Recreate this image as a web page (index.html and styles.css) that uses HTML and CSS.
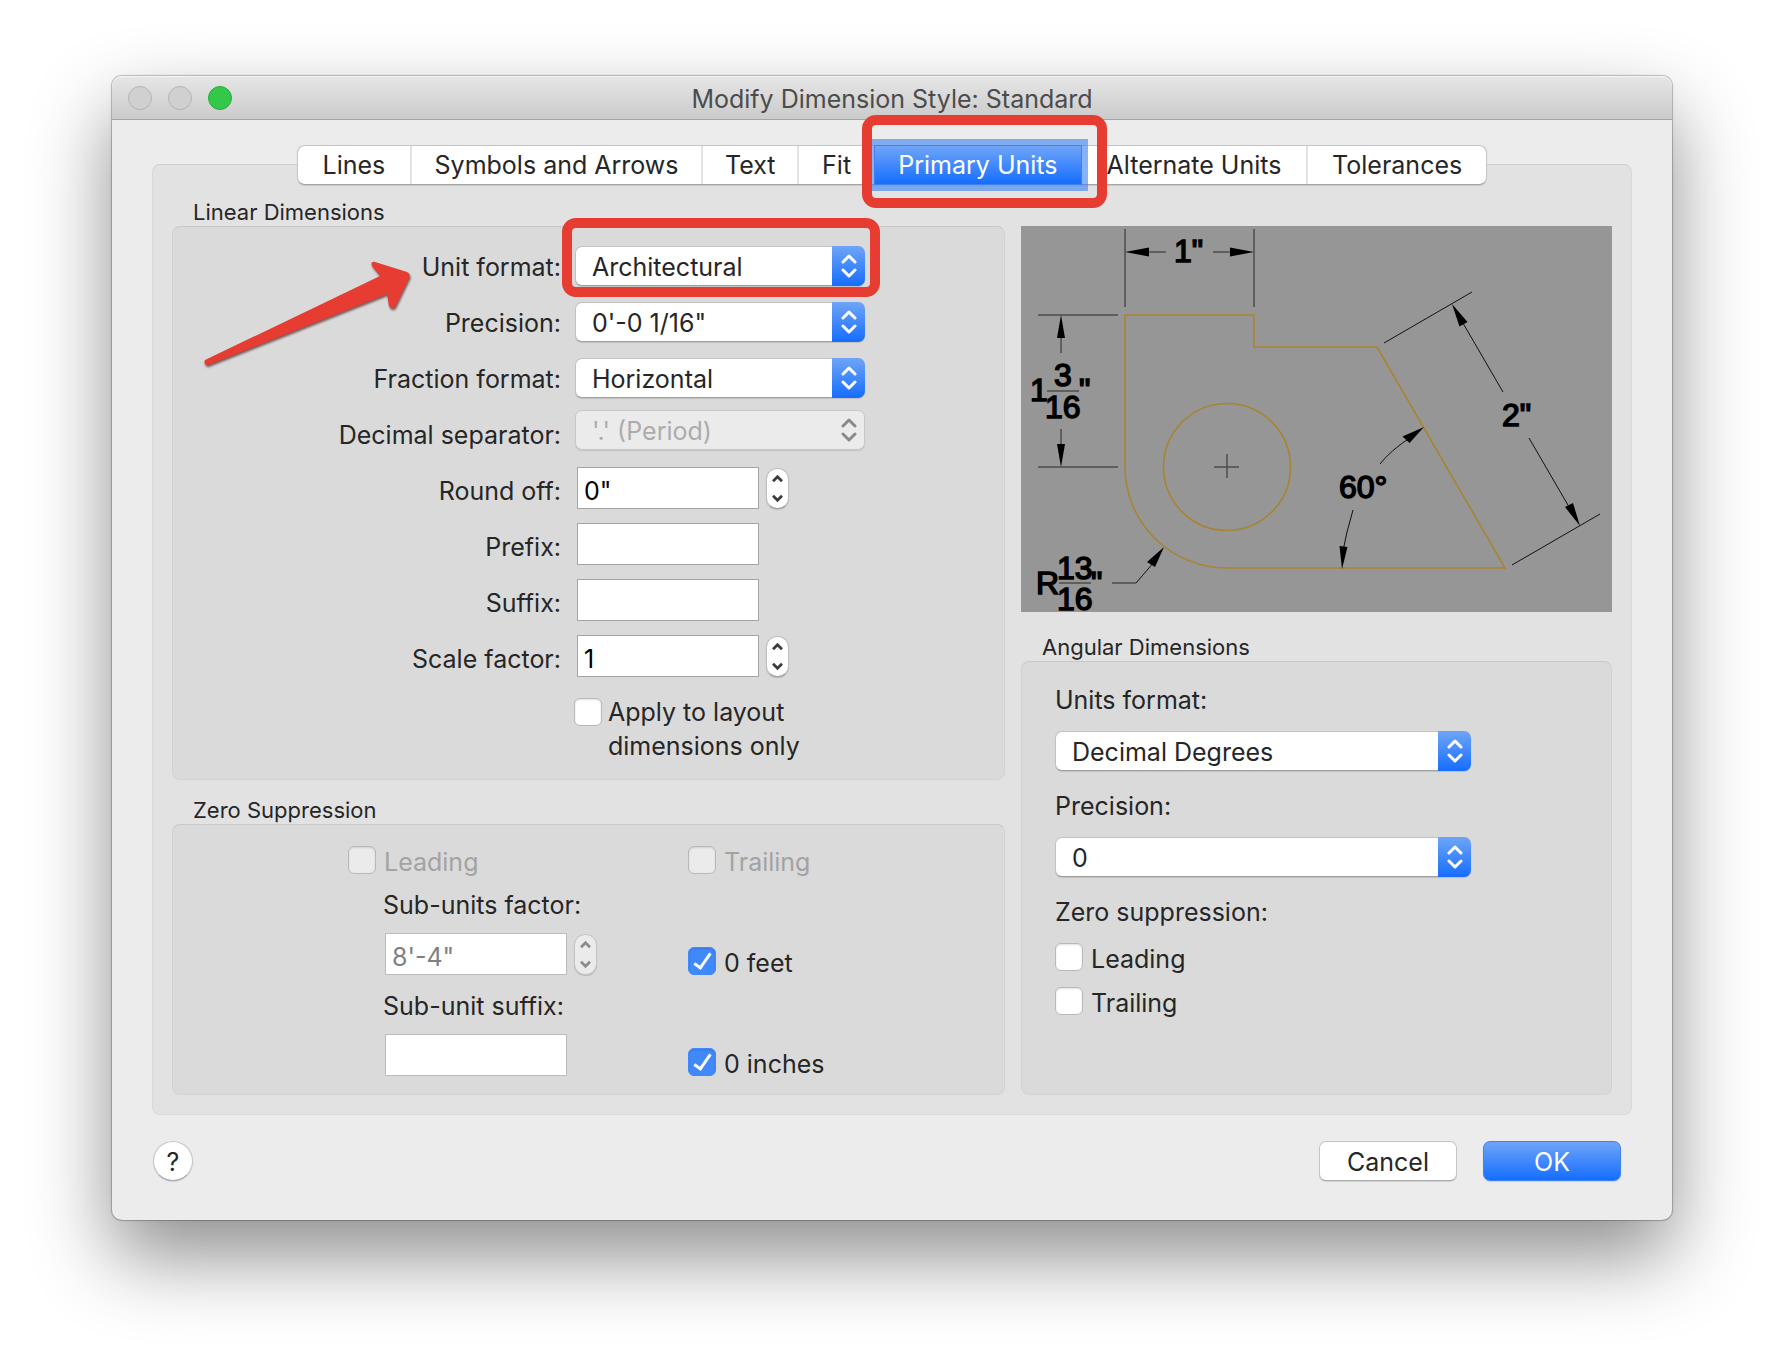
FILE: index.html
```html
<!DOCTYPE html>
<html lang="en">
<head>
  <meta charset="UTF-8" />
  <title>Modify Dimension Style: Standard</title>
  <meta name="viewport" content="width=device-width, initial-scale=1" />
  <link rel="stylesheet" href="styles.css">
</head>
<body>
  <svg class="sprite" aria-hidden="true">
    <symbol id="updown" viewBox="0 0 16 28">
      <path d="M2 10 L8 4 L14 10 M2 18 L8 24 L14 18" />
    </symbol>
    <symbol id="up" viewBox="0 0 14 10">
      <path d="M2 8 L7 3 L12 8" />
    </symbol>
    <symbol id="down" viewBox="0 0 14 10">
      <path d="M2 2 L7 7 L12 2" />
    </symbol>
  </svg>

  <main class="window">
    <header class="titlebar">
      <div class="lights">
        <button type="button" class="light" aria-label="Close" disabled></button>
        <button type="button" class="light" aria-label="Minimize" disabled></button>
        <button type="button" class="light zoom" aria-label="Zoom"></button>
      </div>
      <h1>Modify Dimension Style: Standard</h1>
    </header>

    <form class="content">
      <div class="tabs" role="tablist">
        <button type="button" role="tab">Lines</button>
        <button type="button" role="tab">Symbols and Arrows</button>
        <button type="button" role="tab">Text</button>
        <button type="button" role="tab">Fit</button>
        <button type="button" role="tab" class="active" aria-selected="true">Primary Units<span class="mark mark-tab"></span></button>
        <button type="button" role="tab">Alternate Units</button>
        <button type="button" role="tab">Tolerances</button>
      </div>

      <div class="panel">
        <div class="column">
          <section>
            <h2>Linear Dimensions</h2>
            <div class="group linear">
              <svg class="arrow" viewBox="0 0 216 114" aria-hidden="true">
                <path d="M4 100 L179 16 L171 6 Q169 1 174 2 L206 12 Q210 14 208 18 L194 47 Q190 50 188 46 L186 34 L7 105 Q2 105 4 100 Z" />
              </svg>
              <div class="row">
                <label for="unit-format">Unit format:</label>
                <div class="select">
                  <select id="unit-format"><option>Architectural</option></select>
                  <span class="cap"><svg><use href="#updown" /></svg></span>
                  <span class="mark mark-select"></span>
                </div>
              </div>
              <div class="row">
                <label for="precision">Precision:</label>
                <div class="select">
                  <select id="precision"><option>0'-0 1/16"</option></select>
                  <span class="cap"><svg><use href="#updown" /></svg></span>
                </div>
              </div>
              <div class="row">
                <label for="fraction">Fraction format:</label>
                <div class="select">
                  <select id="fraction"><option>Horizontal</option></select>
                  <span class="cap"><svg><use href="#updown" /></svg></span>
                </div>
              </div>
              <div class="row row-disabled">
                <label for="separator">Decimal separator:</label>
                <div class="select">
                  <select id="separator" disabled><option>'.' (Period)</option></select>
                  <span class="cap"><svg><use href="#updown" /></svg></span>
                </div>
              </div>
              <div class="row">
                <label for="round">Round off:</label>
                <div class="field">
                  <input type="text" id="round" value='0"' />
                  <span class="stepper">
                    <button type="button" aria-label="Increase"><svg><use href="#up" /></svg></button>
                    <button type="button" aria-label="Decrease"><svg><use href="#down" /></svg></button>
                  </span>
                </div>
              </div>
              <div class="row">
                <label for="prefix">Prefix:</label>
                <div class="field"><input type="text" id="prefix" /></div>
              </div>
              <div class="row">
                <label for="suffix">Suffix:</label>
                <div class="field"><input type="text" id="suffix" /></div>
              </div>
              <div class="row">
                <label for="scale">Scale factor:</label>
                <div class="field">
                  <input type="text" id="scale" value="1" />
                  <span class="stepper">
                    <button type="button" aria-label="Increase"><svg><use href="#up" /></svg></button>
                    <button type="button" aria-label="Decrease"><svg><use href="#down" /></svg></button>
                  </span>
                </div>
              </div>
              <label class="check layout-only">
                <input type="checkbox" />
                <span>Apply to layout<br>dimensions only</span>
              </label>
            </div>
          </section>

          <section>
            <h2>Zero Suppression</h2>
            <div class="group zero">
              <label class="check off"><input type="checkbox" disabled /><span>Leading</span></label>
              <label class="check off"><input type="checkbox" disabled /><span>Trailing</span></label>
              <div class="sub">
                <label for="sub-factor">Sub-units factor:</label>
                <div class="field">
                  <input type="text" id="sub-factor" value="8'-4&quot;" disabled />
                  <span class="stepper off">
                    <button type="button" aria-label="Increase" disabled><svg><use href="#up" /></svg></button>
                    <button type="button" aria-label="Decrease" disabled><svg><use href="#down" /></svg></button>
                  </span>
                </div>
              </div>
              <label class="check low"><input type="checkbox" checked /><span>0 feet</span></label>
              <div class="sub">
                <label for="sub-suffix">Sub-unit suffix:</label>
                <div class="field"><input type="text" id="sub-suffix" disabled /></div>
              </div>
              <label class="check low"><input type="checkbox" checked /><span>0 inches</span></label>
            </div>
          </section>
        </div>

        <div class="column side">
          <svg class="preview" viewBox="-1 0 591 386" role="img" aria-label="Dimension preview">
            <!-- part outline -->
            <g class="part">
              <path d="M103 241 V89 H232 V121 H355 L483 342 H205 A102 101 0 0 1 103 241 Z" />
              <circle cx="205" cy="241" r="63.5" />
            </g>
            <!-- extension and dimension lines -->
            <g class="soft">
              <path d="M103 3 V81 M232 3 V81 M120 26 H144 M191 26 H215" />
              <path d="M16 89 H96 M16 241 H96 M39 105 V127 M39 203 V225" />
              <path d="M192 241 H217 M205 228 V252 M25 165 H57 M37 357 H69 M90 357 H114" />
            </g>
            <g class="hard">
              <path d="M362 117 L450 66 M490 339 L578 288 M438 92 L481 166 M507 212 L550 286" />
              <path d="M114 357 L133 335 M389 211 Q368 225 358 238 M331 284 L325 306 L321 325" />
            </g>
            <g class="heads">
              <path d="M103 26 L127 21.500 V30.500 Z M232 26 L208 21.500 V30.500 Z" />
              <path d="M39 89 L35 112 H43 Z M39 241 L35 218 H43 Z" />
              <path d="M430 78 L437.500 100.500 L445.500 96 Z M558 300 L543 281 L551 277 Z" />
              <path d="M402 201 L380.500 210.500 L387.500 217 Z M320 343 L317.500 320 L325.500 321 Z M142 321 L125 336 L133 341 Z" />
            </g>
            <g class="dims">
              <text x="152" y="36">1"</text>
              <text x="8" y="175">1</text>
              <text x="32" y="160">3</text>
              <text x="23" y="192">16</text>
              <text x="57" y="175">"</text>
              <text x="480" y="200">2"</text>
              <text x="317" y="272">60°</text>
              <text x="14" y="368">R</text>
              <text x="35" y="353">13</text>
              <text x="35" y="384">16</text>
              <text x="69" y="368">"</text>
            </g>
          </svg>

          <section class="fill">
            <h2>Angular Dimensions</h2>
            <div class="group angular">
              <label for="angle-format">Units format:</label>
              <div class="select">
                <select id="angle-format"><option>Decimal Degrees</option></select>
                <span class="cap"><svg><use href="#updown" /></svg></span>
              </div>
              <label for="angle-precision">Precision:</label>
              <div class="select">
                <select id="angle-precision"><option>0</option></select>
                <span class="cap"><svg><use href="#updown" /></svg></span>
              </div>
              <p>Zero suppression:</p>
              <label class="check"><input type="checkbox" /><span>Leading</span></label>
              <label class="check"><input type="checkbox" /><span>Trailing</span></label>
            </div>
          </section>
        </div>
      </div>

      <footer>
        <button type="button" class="help" aria-label="Help">?</button>
        <button type="button" class="btn">Cancel</button>
        <button type="submit" class="btn primary">OK</button>
      </footer>
    </form>
  </main>
</body>
</html>
```
FILE: styles.css
```css
*, *::before, *::after {
  box-sizing: border-box;
}

body {
  margin: 0;
  padding: 76px 112px 148px;
  background-color: #fff;
  color: #262626;
  font-family: Inter, 'Liberation Sans', sans-serif;
  font-size: 25px;
  line-height: 30px;
}

button, input, select {
  font: inherit;
  color: inherit;
  margin: 0;
}

h1, h2, p {
  margin: 0;
  font-weight: 400;
}

.sprite {
  display: none;
}

/* Window */
.window {
  background-color: #ececec;
  border-radius: 10px;
  box-shadow: 0 0 1px 1px rgba(0, 0, 0, 0.25), 0 36px 80px rgba(0, 0, 0, 0.45);
}

.titlebar {
  position: relative;
  display: flex;
  align-items: center;
  justify-content: center;
  height: 44px;
  background: linear-gradient(#e6e6e6, #cbcbcb);
  border-bottom: 1px solid #a3a3a3;
  border-radius: 10px 10px 0 0;
  box-shadow: inset 0 1px 0 #f6f6f6;
}

.titlebar h1 {
  padding-top: 2px;
  font-size: 25px;
  color: #4c4c4c;
}

.lights {
  position: absolute;
  left: 16px;
  display: flex;
  gap: 16px;
}

.light {
  width: 24px;
  height: 24px;
  padding: 0;
  border: 1px solid #b4b4b4;
  border-radius: 50%;
  background-color: #d0d0d0;
}

.light.zoom {
  background-color: #34c84a;
  border-color: #2bac3c;
}

.content {
  padding: 25px 40px 39px;
}

/* Tabs */
.tabs {
  position: relative;
  z-index: 1;
  display: grid;
  grid-template-columns: 114fr 292fr 96fr 75fr 208fr 227fr 178fr;
  max-width: 1190px;
  height: 40px;
  margin: 0 auto -21px;
  background-color: #fff;
  border: 1px solid #c4c4c4;
  border-bottom-color: #a5a5a5;
  border-radius: 8px;
  box-shadow: 0 1px 1px rgba(0, 0, 0, 0.12);
}

.tabs button {
  padding: 0;
  border: none;
  border-right: 2px solid #e3e3e3;
  background: none;
  white-space: nowrap;
}

.tabs button:nth-child(4),
.tabs button:last-child {
  border-right: none;
}

.tabs .active {
  position: relative;
  margin: -1px 0;
  border: 1px solid #3d82ee;
  background: linear-gradient(#6fa5f8, #156dff);
  color: #fff;
  box-shadow: 0 0 0 6px rgba(61, 130, 240, 0.62);
}

/* Red callouts */
.mark {
  position: absolute;
  border: 10px solid #e63c31;
  border-radius: 14px;
  pointer-events: none;
}

.mark-tab {
  inset: -31px -26px -24px -13px;
}

.mark-select {
  inset: -28px -15px -11px -13px;
}

.arrow {
  position: absolute;
  top: 33px;
  left: 28px;
  width: 216px;
  height: 114px;
  fill: #e63c31;
  filter: drop-shadow(1px 2px 1px rgba(60, 0, 0, 0.6));
}

/* Panel */
.panel {
  display: grid;
  grid-template-columns: 833fr 591fr;
  gap: 16px;
  padding: 33px 19px 19px;
  background-color: #e2e2e2;
  border: 1px solid #d9d9d9;
  border-top-color: #cfcfcf;
  border-radius: 8px;
}

.column {
  display: flex;
  flex-direction: column;
  gap: 16px;
}

.side {
  gap: 21px;
  padding-top: 28px;
}

.fill {
  flex: 1;
  display: flex;
  flex-direction: column;
}

h2 {
  padding-left: 21px;
  font-size: 22px;
  line-height: 28px;
}

.group {
  background-color: #dadada;
  border: 1px solid #d2d2d2;
  border-top-color: #c8c8c8;
  border-radius: 8px;
}

.linear {
  position: relative;
  padding: 11px 0 16px;
}

.row {
  display: grid;
  grid-template-columns: 388px 290px;
  gap: 14px;
  align-items: center;
  height: 56px;
}

.row > label {
  padding-top: 2px;
  text-align: right;
}

.row-disabled .select {
  margin-bottom: 8px;
}

/* Pop-up menus */
.select {
  position: relative;
}

.select select {
  display: block;
  width: 100%;
  height: 40px;
  padding: 2px 48px 0 16px;
  appearance: none;
  background-color: #fff;
  border: 1px solid #c2c2c2;
  border-bottom-color: #9f9f9f;
  border-radius: 7px;
  box-shadow: 0 1px 1px rgba(0, 0, 0, 0.12);
}

.cap {
  position: absolute;
  top: 0;
  right: 0;
  bottom: 0;
  display: flex;
  align-items: center;
  justify-content: center;
  width: 33px;
  background: linear-gradient(#6fa5f8, #156dff);
  border-radius: 0 7px 7px 0;
  pointer-events: none;
}

.cap svg {
  width: 16px;
  height: 28px;
  fill: none;
  stroke: #fff;
  stroke-width: 3;
  stroke-linecap: round;
  stroke-linejoin: round;
}

.select select:disabled {
  background-color: #ebebeb;
  border-color: #c8c8c8;
  color: #acacac;
  opacity: 1;
}

.select select:disabled + .cap {
  background: none;
}

.select select:disabled + .cap svg {
  stroke: #8a8a8a;
}

/* Text fields */
.field {
  display: flex;
  gap: 7px;
}

.row .field {
  padding: 0 0 4px 2px;
}

.field input {
  width: 182px;
  height: 42px;
  padding: 6px 6px 0;
  background-color: #fff;
  border: 1px solid #a6a6a6;
  border-radius: 0;
  color: #000;
}

.field input:disabled {
  border-color: #bcbcbc;
  color: #808080;
}

.stepper {
  display: flex;
  flex-direction: column;
  width: 23px;
  height: 41px;
  margin-top: 1px;
  background-color: #fff;
  border: 1px solid #c0c0c0;
  border-bottom-color: #9f9f9f;
  border-radius: 11px;
  box-shadow: 0 1px 1px rgba(0, 0, 0, 0.15);
}

.stepper button {
  display: flex;
  flex: 1;
  align-items: center;
  justify-content: center;
  padding: 0;
  border: none;
  background: none;
}

.stepper svg {
  width: 13px;
  height: 9px;
  fill: none;
  stroke: #3c3c3c;
  stroke-width: 3;
}

.stepper.off {
  background-color: #ebebeb;
  border-color: #c4c4c4;
}

.stepper.off svg {
  stroke: #8c8c8c;
}

/* Check boxes */
.check {
  display: flex;
  align-items: flex-start;
  gap: 8px;
  height: 28px;
}

.check input {
  position: relative;
  flex: none;
  width: 28px;
  height: 28px;
  appearance: none;
  background-color: #fff;
  border: 1px solid #b9b9b9;
  border-radius: 6px;
  box-shadow: inset 0 1px 2px rgba(0, 0, 0, 0.12);
}

.check input:checked {
  background-color: #3f89fa;
  border-color: #3f89fa;
}

.check input:checked::after {
  content: '';
  position: absolute;
  top: 2px;
  left: 9px;
  width: 9px;
  height: 19px;
  border: solid #fff;
  border-width: 0 3px 3px 0;
  transform: rotate(35deg);
}

.check input:disabled {
  background-color: #ebebeb;
}

.check span {
  padding-top: 1px;
}

.check.off {
  color: #a3a3a3;
}

.check.layout-only {
  height: auto;
  padding: 12px 0 0 401px;
  gap: 6px;
  line-height: 34px;
}

.layout-only span {
  margin-top: -4px;
}

.zero {
  display: grid;
  grid-template-columns: 340px 1fr;
  grid-template-rows: 28px auto auto;
  gap: 16px 0;
  padding: 21px 0 18px 175px;
}

.low {
  align-self: end;
}

.sub {
  display: flex;
  flex-direction: column;
  gap: 13px;
  padding-left: 35px;
}

.sub .field {
  padding-left: 2px;
}

.angular {
  display: flex;
  flex: 1;
  flex-direction: column;
  gap: 16px;
  padding: 23px 33px;
}

.angular .select {
  width: 416px;
  margin-bottom: 4px;
}

/* Drawing preview */
.preview {
  display: block;
  width: 100%;
  background-color: #969696;
}

.part {
  fill: none;
  stroke: #a8842e;
  stroke-width: 1.5;
}

.soft {
  fill: none;
  stroke: #4e4e4e;
  stroke-width: 1.5;
}

.hard {
  fill: none;
  stroke: #111;
  stroke-width: 1;
}

.dims {
  font-family: 'Liberation Sans', Arial, sans-serif;
  font-size: 32px;
  fill: #000;
  stroke: #000;
  stroke-width: 1.5;
}

/* Footer */
footer {
  display: flex;
  align-items: center;
  padding: 26px 11px 0 1px;
}

.btn, .help {
  height: 40px;
  padding: 1px 0 0;
  background-color: #fff;
  border: 1px solid #c6c6c6;
  border-bottom-color: #a8a8a8;
  box-shadow: 0 1px 1px rgba(0, 0, 0, 0.12);
}

.btn {
  width: 138px;
  border-radius: 7px;
}

.help {
  width: 40px;
  margin-right: auto;
  border-radius: 50%;
}

.btn.primary {
  margin-left: 26px;
  background: linear-gradient(#6fa5f8, #156dff);
  border-color: #3d82ee;
  color: #fff;
}
```
